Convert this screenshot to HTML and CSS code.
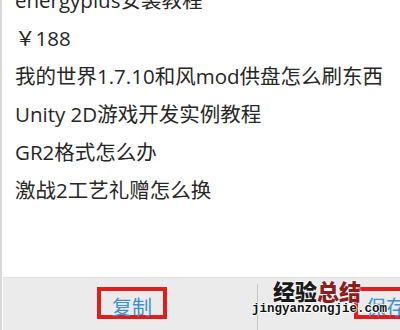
FILE: index.html
```html
<!DOCTYPE html>
<html lang="zh">
<head>
  <meta charset="UTF-8" />
  <title>复制</title>
  <link rel="stylesheet" href="styles.css">
</head>
<body>
  <div id="screen">
    <div id="list">
      <div class="line">energyplus安装教程</div>
      <div class="line">￥188</div>
      <div class="line">我的世界1.7.10和风mod供盘怎么刷东西</div>
      <div class="line">Unity 2D游戏开发实例教程</div>
      <div class="line">GR2格式怎么办</div>
      <div class="line">激战2工艺礼赠怎么换</div>
    </div>

    <div id="bar">
      <div class="btn btn-copy"><span class="mark">复制</span></div>
      <div class="divider"></div>
      <div class="btn btn-save"><span class="mark mark-open">保存</span></div>
    </div>

    <div id="watermark">
      <div class="wm-title"><span>经验</span><span class="wm-red">总结</span></div>
      <div class="wm-url">jingyanzongjie.com</div>
    </div>
  </div>
</body>
</html>
```

FILE: styles.css
```css
html, body {
  margin: 0;
  padding: 0;
  background: #fff;
}
#screen {
  position: relative;
  width: 400px;
  height: 330px;
  overflow: hidden;
  font-family: "Open Sans", "Noto Sans CJK SC", sans-serif;
  border-left: 2px solid #d8d8d8;
  box-sizing: border-box;
}
#list {
  margin-top: -19px;
  padding-left: 13px;
  height: 296px;
}
.line {
  height: 38px;
  line-height: 38px;
  font-size: 20.5px;
  color: #262626;
  white-space: nowrap;
}
#bar {
  display: flex;
  align-items: stretch;
  height: 53px;
  margin-left: 1px;
  background: #ebebeb;
  border-top: 1px solid #e2e2e2;
}
.btn {
  display: flex;
  align-items: flex-start;
  font-size: 20px;
  color: #3d8fd1;
}
.btn-copy {
  flex: 0 0 254px;
  padding-left: 94px;
  box-sizing: border-box;
}
.divider {
  flex: 0 0 1px;
  margin-top: 6px;
  background: #c6c6c6;
}
.btn-save {
  flex: 1;
  min-width: 0;
  overflow: hidden;
  padding-left: 96px;
}
.mark {
  display: block;
  margin-top: 9px;
  padding: 7px 11px 6px 11px;
  height: 32px;
  box-sizing: border-box;
  border: 4px solid #e21b1b;
  line-height: 18px;
  white-space: nowrap;
  font-family: "Noto Sans CJK SC", sans-serif;
}
.mark-open {
  padding-left: 8px;
  border-right: none;
}
#watermark {
  position: absolute;
  left: 250px;
  top: 279px;
  width: 136px;
}
.wm-title {
  padding-left: 21px;
  font-family: "Noto Sans CJK SC", sans-serif;
  font-weight: 900;
  font-size: 22px;
  line-height: 22px;
  color: #1a1a1a;
  text-shadow: 0 0 2px #fff, 0 0 2px #fff;
}
.wm-red {
  color: #8a1f1f;
}
.wm-url {
  margin-top: 1px;
  font-family: "Liberation Mono", monospace;
  font-weight: bold;
  font-size: 12.5px;
  line-height: 14px;
  color: #111;
  text-shadow: 1px 0 0 #fff, -1px 0 0 #fff, 0 1px 0 #fff, 0 -1px 0 #fff;
}
```
